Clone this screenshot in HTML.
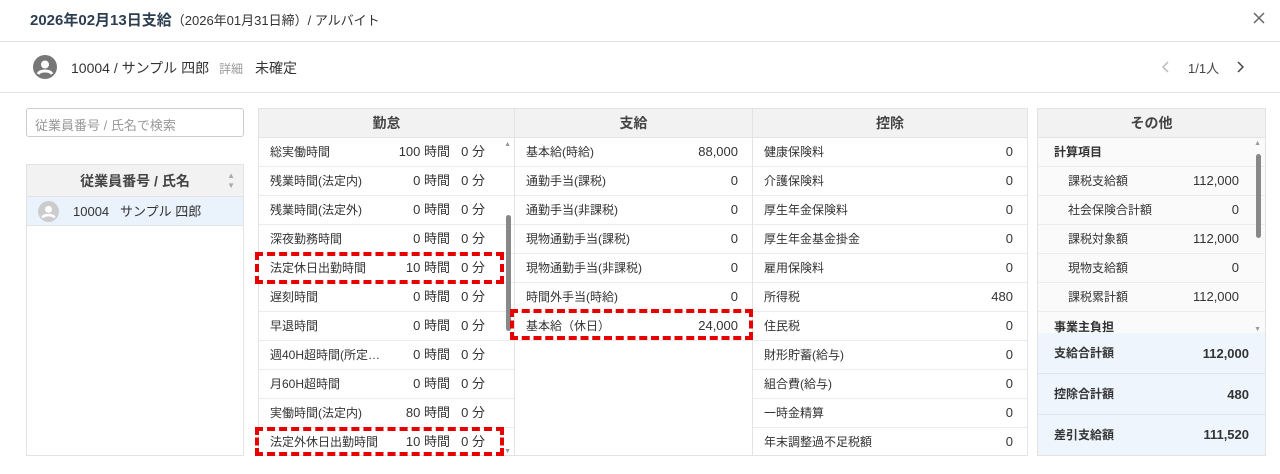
<!DOCTYPE html>
<html><head><meta charset="utf-8"><style>
*{box-sizing:border-box;margin:0;padding:0}
body{width:1280px;height:474px;background:#fff;font-family:"Liberation Sans","Noto Sans CJK JP",sans-serif;color:#333;position:relative;overflow:hidden;font-size:13px}
.abs{position:absolute}
.hline{position:absolute;left:0;width:1280px;height:1px;background:#e3e3e3}
.col{position:absolute;top:108px;height:348px;border:1px solid #e3e3e3;background:#fff}
.hd{height:29px;background:#f2f2f2;border-bottom:1px solid #e3e3e3;text-align:center;line-height:29px;font-weight:bold;font-size:14px;color:#444}
.r{height:29px;border-bottom:1px solid #ececec;position:relative;font-size:12px;line-height:28px;padding-left:11px;color:#333}
.r .v{position:absolute;right:14px;top:0;font-size:13px}
.r .h{position:absolute;top:0;font-size:13px;right:64px}
.r .m{position:absolute;top:0;font-size:13px;right:29px}
.dash{position:absolute;border:4px dashed #e60000}
</style></head><body>
<div class="abs" style="left:30px;top:9px;font-size:15px;font-weight:bold;color:#2c3e50">2026年02月13日支給<span style="font-weight:normal;font-size:13px;color:#333">（2026年01月31日締）/ アルバイト</span></div>
<svg class="abs" style="left:1253px;top:12px" width="12" height="12" viewBox="0 0 12 12"><path d="M1 1L11 11M11 1L1 11" stroke="#666" stroke-width="1.5"/></svg>
<div class="hline" style="top:41px"></div>
<svg class="abs" style="left:33px;top:55px" width="24" height="24" viewBox="0 0 24 24"><circle cx="12" cy="12" r="12" fill="#777"/><circle cx="12" cy="9.5" r="4" fill="#fff"/><path d="M5 19c2-4 12-4 14 0" stroke="#fff" stroke-width="3" fill="none"/></svg>
<div class="abs" style="left:71px;top:58px;font-size:14px;color:#333">10004 / サンプル 四郎 <span style="font-size:12px;color:#999;margin-left:6px">詳細</span><span style="margin-left:12px">未確定</span></div>
<svg class="abs" style="left:1162px;top:61px" width="8" height="12" viewBox="0 0 8 12"><path d="M6 1L1 6L6 11" stroke="#bbb" stroke-width="1.5" fill="none"/></svg>
<div class="abs" style="left:1188px;top:58px;font-size:13px;color:#444">1/1人</div>
<svg class="abs" style="left:1236px;top:61px" width="8" height="12" viewBox="0 0 8 12"><path d="M2 1L7 6L2 11" stroke="#444" stroke-width="1.5" fill="none"/></svg>
<div class="hline" style="top:92px"></div>
<div class="abs" style="left:26px;top:108px;width:218px;height:29px;border:1px solid #ccc;border-radius:3px;padding:6px 8px;color:#999;font-size:13px">従業員番号 / 氏名で検索</div>
<div class="abs" style="left:26px;top:164px;width:218px;height:292px;border:1px solid #e3e3e3">
<div style="height:32px;background:#f2f2f2;border-bottom:1px solid #e3e3e3;text-align:center;line-height:32px;font-weight:bold;font-size:14px;color:#444;position:relative">従業員番号 / 氏名<span style="position:absolute;right:8px;top:6px;font-size:8px;line-height:10px;color:#aaa">▲<br>▼</span></div>
<div style="height:29px;background:#eaf2fc;border-bottom:1px solid #e3e3e3;position:relative;font-size:13px;line-height:29px;padding-left:46px">10004&nbsp;&nbsp; サンプル 四郎
<svg style="position:absolute;left:11px;top:4px" width="21" height="21" viewBox="0 0 24 24"><circle cx="12" cy="12" r="12" fill="#ccc"/><circle cx="12" cy="9.5" r="4" fill="#fff"/><path d="M5 19c2-4 12-4 14 0" stroke="#fff" stroke-width="3" fill="none"/></svg></div>
</div>

<div class="col" style="left:258px;width:257px">
<div class="hd">勤怠</div>
<div class="r">総実働時間<span class="h">100 時間</span><span class="m">0 分</span></div>
<div class="r">残業時間(法定内)<span class="h">0 時間</span><span class="m">0 分</span></div>
<div class="r">残業時間(法定外)<span class="h">0 時間</span><span class="m">0 分</span></div>
<div class="r">深夜勤務時間<span class="h">0 時間</span><span class="m">0 分</span></div>
<div class="r">法定休日出勤時間<span class="h">10 時間</span><span class="m">0 分</span></div>
<div class="r">遅刻時間<span class="h">0 時間</span><span class="m">0 分</span></div>
<div class="r">早退時間<span class="h">0 時間</span><span class="m">0 分</span></div>
<div class="r">週40H超時間(所定…<span class="h">0 時間</span><span class="m">0 分</span></div>
<div class="r">月60H超時間<span class="h">0 時間</span><span class="m">0 分</span></div>
<div class="r">実働時間(法定内)<span class="h">80 時間</span><span class="m">0 分</span></div>
<div class="r" style="border:none">法定外休日出勤時間<span class="h">10 時間</span><span class="m">0 分</span></div>
<div class="abs" style="right:3px;top:32px;font-size:7px;color:#999">▲</div>
<div class="abs" style="right:3px;top:106px;width:5px;height:116px;background:#888;border-radius:3px"></div>
<div class="abs" style="right:3px;bottom:0;font-size:7px;color:#999">▼</div>
</div>

<div class="col" style="left:514px;width:239px">
<div class="hd">支給</div>
<div class="r">基本給(時給)<span class="v">88,000</span></div>
<div class="r">通勤手当(課税)<span class="v">0</span></div>
<div class="r">通勤手当(非課税)<span class="v">0</span></div>
<div class="r">現物通勤手当(課税)<span class="v">0</span></div>
<div class="r">現物通勤手当(非課税)<span class="v">0</span></div>
<div class="r">時間外手当(時給)<span class="v">0</span></div>
<div class="r">基本給（休日）<span class="v">24,000</span></div>
</div>

<div class="col" style="left:752px;width:276px">
<div class="hd">控除</div>
<div class="r">健康保険料<span class="v">0</span></div>
<div class="r">介護保険料<span class="v">0</span></div>
<div class="r">厚生年金保険料<span class="v">0</span></div>
<div class="r">厚生年金基金掛金<span class="v">0</span></div>
<div class="r">雇用保険料<span class="v">0</span></div>
<div class="r">所得税<span class="v">480</span></div>
<div class="r">住民税<span class="v">0</span></div>
<div class="r">財形貯蓄(給与)<span class="v">0</span></div>
<div class="r">組合費(給与)<span class="v">0</span></div>
<div class="r">一時金精算<span class="v">0</span></div>
<div class="r" style="border:none">年末調整過不足税額<span class="v">0</span></div>
</div>

<div class="col" style="left:1037px;width:229px;background:#fafafa">
<div class="hd">その他</div>
<div style="height:195px;overflow:hidden;position:relative">
<div class="r" style="font-weight:bold;padding-left:16px">計算項目</div>
<div class="r" style="padding-left:30px">課税支給額<span class="v" style="right:26px">112,000</span></div>
<div class="r" style="padding-left:30px">社会保険合計額<span class="v" style="right:26px">0</span></div>
<div class="r" style="padding-left:30px">課税対象額<span class="v" style="right:26px">112,000</span></div>
<div class="r" style="padding-left:30px">現物支給額<span class="v" style="right:26px">0</span></div>
<div class="r" style="padding-left:30px">課税累計額<span class="v" style="right:26px">112,000</span></div>
<div class="r" style="font-weight:bold;padding-left:16px;border:none;line-height:30px">事業主負担</div>
<div class="abs" style="right:4px;top:2px;font-size:7px;color:#999">▲</div>
<div class="abs" style="right:4px;top:16px;width:5px;height:84px;background:#888;border-radius:3px"></div>
<div class="abs" style="right:4px;bottom:0;font-size:7px;color:#999">▼</div>
</div>
<div style="background:#eef5fd;height:122px;font-size:12px;font-weight:bold">
<div style="height:41px;line-height:41px;padding-left:16px;border-bottom:1px solid #dde6f0;position:relative">支給合計額<span style="position:absolute;right:16px;font-size:13px">112,000</span></div>
<div style="height:41px;line-height:41px;padding-left:16px;border-bottom:1px solid #dde6f0;position:relative">控除合計額<span style="position:absolute;right:16px;font-size:13px">480</span></div>
<div style="height:40px;line-height:40px;padding-left:16px;position:relative">差引支給額<span style="position:absolute;right:16px;font-size:13px">111,520</span></div>
</div>
</div>

<div class="dash" style="left:255px;top:252px;width:249px;height:32px"></div>
<div class="dash" style="left:510px;top:309px;width:243px;height:31px"></div>
<div class="dash" style="left:255px;top:427px;width:249px;height:29px"></div>
</body></html>
